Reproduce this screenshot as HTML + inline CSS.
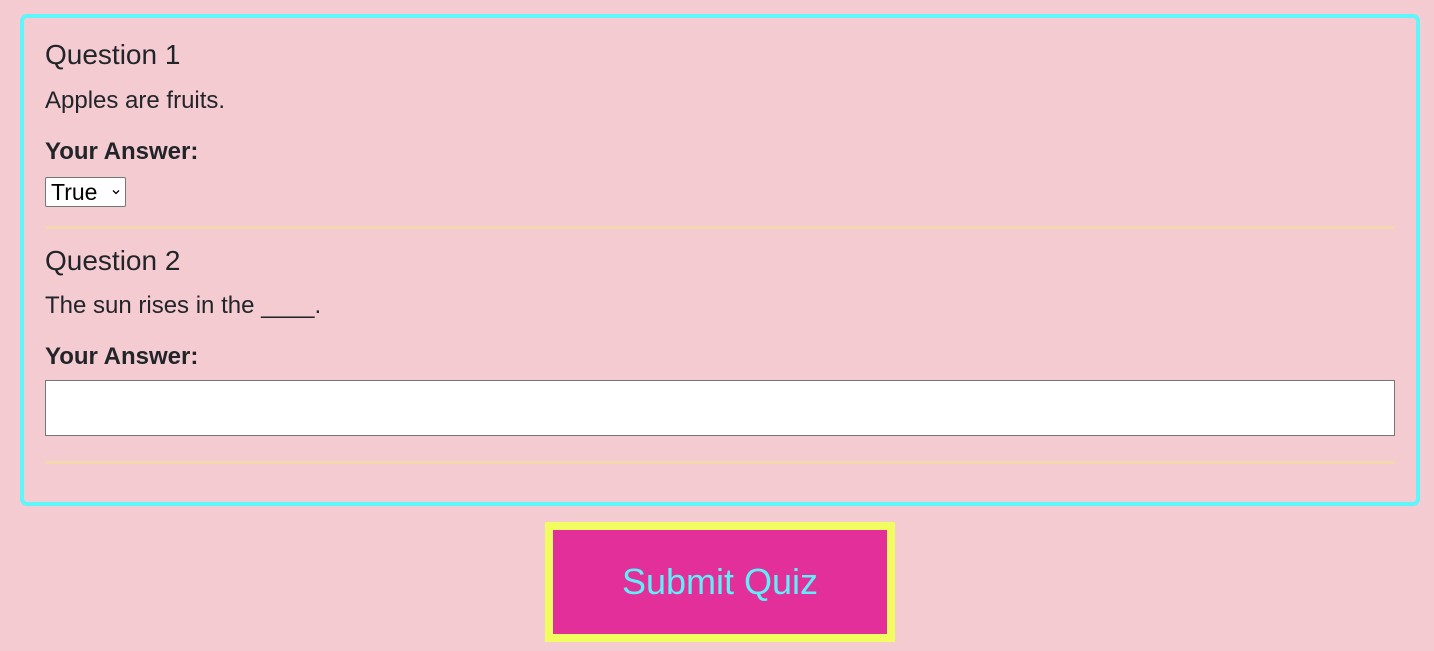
<!DOCTYPE html>
<html><head><style>
body{margin:0;background:#f5cbd2;font-family:"Liberation Sans",Arial,Helvetica,sans-serif;color:#212529;width:1434px;height:651px;overflow:hidden;position:relative}
.box{position:absolute;left:20px;top:14px;width:1392px;height:484px;border:4px solid #5ef5fb;border-radius:7px}
.t{position:absolute;left:45px;white-space:nowrap;line-height:1.15}
.h{font-size:28px}
.p{font-size:24px}
.b{font-size:24px;font-weight:bold}
.hr{position:absolute;left:45px;width:1350px;height:3px;background:#f2d8b0}
.sel{position:absolute;left:45px;top:177px;width:79px;height:28px;background:#fff;border:1px solid #767676;border-radius:2px;font-size:23px;line-height:28px;color:#000}
.inp{position:absolute;left:45px;top:380px;width:1348px;height:54px;background:#fff;border:1px solid #767676}
.btn{position:absolute;left:545px;top:522px;width:334px;height:104px;border:8px solid #f0fc60;background:#e32f9a;color:#5ef0f8;font-size:36px;text-align:center;line-height:104px}
</style></head><body>
<div class="box"></div>
<div class="t h" style="top:39px">Question 1</div>
<div class="t p" style="top:87px">Apples are fruits.</div>
<div class="t b" style="top:138px">Your Answer:</div>
<div class="sel"><span style="margin-left:5px">True</span><svg style="position:absolute;right:5px;top:11px" width="8" height="6" viewBox="0 0 8 6"><path d="M1 1.5L4 4.5L7 1.5" fill="none" stroke="#000" stroke-width="1.3"/></svg></div>
<div class="hr" style="top:226px"></div>
<div class="t h" style="top:245px">Question 2</div>
<div class="t p" style="top:292px">The sun rises in the ____.</div>
<div class="t b" style="top:343px">Your Answer:</div>
<div class="inp"></div>
<div class="hr" style="top:461px"></div>
<div class="btn">Submit Quiz</div>
</body></html>
